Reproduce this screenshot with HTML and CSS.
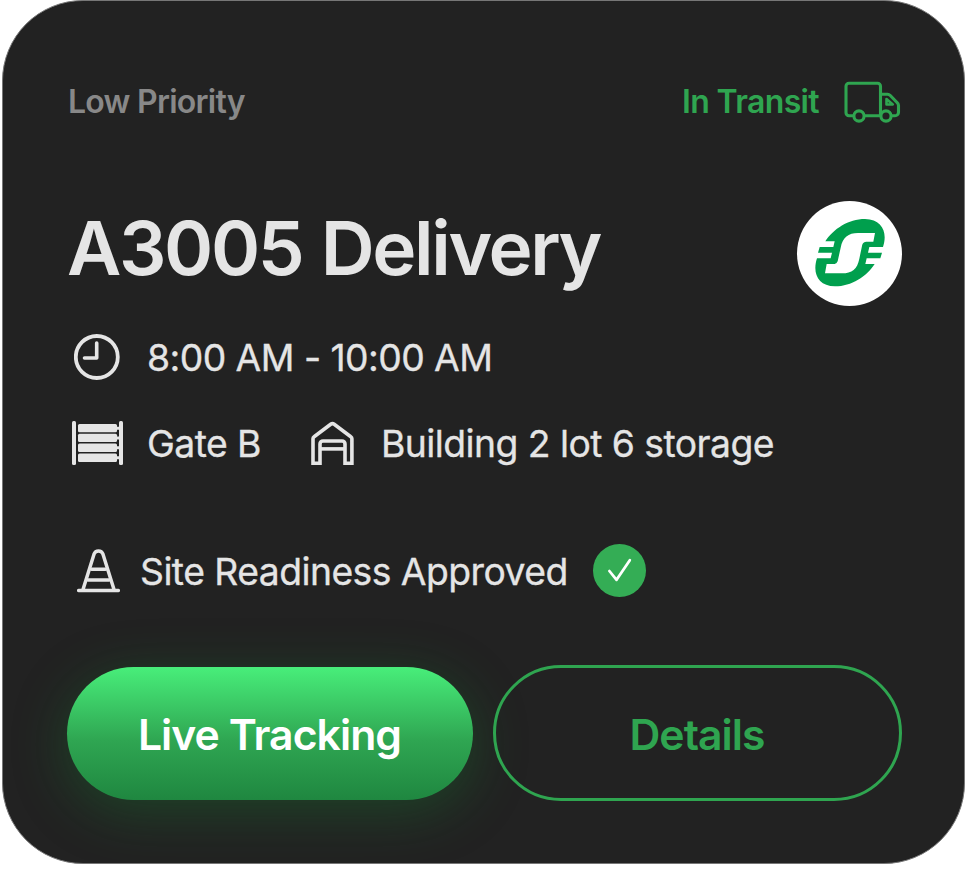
FILE: index.html
```html
<!DOCTYPE html>
<html lang="en">

<head>
  <meta charset="UTF-8">
  <meta name="viewport" content="width=device-width, initial-scale=1.0">
  <title>A3005 Delivery</title>
  <link rel="stylesheet" href="styles.css">
</head>

<body>
  <main class="card">
    <header class="card-header">
      <span class="priority">Low Priority</span>
      <div class="status">
        <span class="status-text">In Transit</span>
        <svg class="truck-icon" viewBox="0 0 58 42" fill="none" stroke="currentColor" stroke-width="3.1" stroke-linejoin="round">
          <path d="M9.500 34.800H5a3 3 0 0 1-3-3V5.300a3 3 0 0 1 3-3h28.500a3 3 0 0 1 3 3V34.800M20.500 34.800H36.500M36.500 13.300H43.500a4 4 0 0 1 2.800 1.200L53 21.500a4 4 0 0 1 1.500 2.800V31.300a3.500 3.500 0 0 1-3.500 3.500H47.500" />
          <circle cx="15" cy="35" r="5.100" />
          <circle cx="42" cy="35" r="5.100" />
          <path d="M42.500 18L48.800 23.500H42.500Z" stroke-width="2.600" />
        </svg>
      </div>
    </header>

    <section class="title-row">
      <h1>A3005 Delivery</h1>
      <div class="logo">
        <svg viewBox="-39 -39 315 315">
          <path fill="#009f4d" d="M46 82C70 45 115 15 165 15C205 15 224 40 224 70C224 80 222 90 219 99H178L174 116H216L211 133H170L166 150H194C170 187 125 217 75 217C35 217 16 192 16 162C16 152 18 142 21 133H62L66 116H24L29 99H70L74 82Z" />
          <path fill="#fff" d="M195 57L190 83H172C162 83 158 86 156 96L148 134C142 165 126 178 96 178H45L50 150H68C78 150 82 147 84 137L92 101C98 70 115 57 144 57Z" />
        </svg>
      </div>
    </section>

    <section class="time-row">
      <svg class="clock-icon" viewBox="0 0 46 46" fill="none" stroke="currentColor" stroke-width="3.800">
        <circle cx="22.800" cy="23" r="21" />
        <path d="M22.700 9V24H10.500" stroke-width="3.600" stroke-linecap="round" stroke-linejoin="round" />
      </svg>
      <span class="time">8:00 AM - 10:00 AM</span>
    </section>

    <section class="place-row">
      <svg class="gate-icon" viewBox="0 0 52 44" fill="currentColor">
        <rect x="0" y="0" width="4" height="44" rx="1.500" />
        <rect x="47" y="0" width="4" height="44" rx="1.500" />
        <rect x="6" y="3" width="39" height="8.300" rx="1.500" />
        <rect x="6" y="12.800" width="39" height="8.300" rx="1.500" />
        <rect x="6" y="22.600" width="39" height="8.400" rx="1.500" />
        <rect x="6" y="32.600" width="39" height="8.500" rx="1.500" />
        <path d="M44 5.700h4v3h-4zM44 15.500h4v3h-4zM44 25.300h4v3h-4zM44 35.300h4v3h-4z" />
      </svg>
      <span class="gate">Gate B</span>
      <svg class="building-icon" viewBox="0 0 44 44" fill="none" stroke="currentColor" stroke-width="3.600">
        <path d="M2 42.200V17.800a2.500 2.500 0 0 1 1.100-2.100L19.700 3.300a3 3 0 0 1 3.500 0L39.800 15.700a2.500 2.500 0 0 1 1.100 2.100V42.200H34V23a3 3 0 0 0-3-3H12a3 3 0 0 0-3 3V42.200Z" />
        <path d="M9 27.900H34" />
      </svg>
      <span class="building">Building 2 lot 6 storage</span>
    </section>

    <section class="readiness-row">
      <svg class="cone-icon" viewBox="0 0 43 44" fill="none" stroke="currentColor" stroke-width="3.500" stroke-linecap="round">
        <path d="M1.700 41.500H41.300M6 40.500L17 5.200Q18.200 2 21.500 2Q24.800 2 26 5.200L37 40.500" />
        <path d="M14.500 20.300H28.500M11 31H32" />
      </svg>
      <span class="readiness">Site Readiness Approved</span>
      <span class="badge">
        <svg viewBox="0 0 54 54" fill="none" stroke="#fff" stroke-width="2.800" stroke-linecap="round" stroke-linejoin="round">
          <path d="M16.700 27.500L24 36.500L37.500 16.500" />
        </svg>
      </span>
    </section>

    <footer class="actions">
      <button class="btn btn-primary" type="button">Live Tracking</button>
      <button class="btn btn-outline" type="button">Details</button>
    </footer>
  </main>
</body>

</html>
```
FILE: styles.css
```css
body {
  font-family: 'Inter', sans-serif;
  margin: 0;
  background-color: #fff;
}

.card {
  box-sizing: border-box;
  width: 963px;
  height: 864px;
  margin-left: 2px;
  padding: 80px 62px 0 64px;
  border: 1px solid #777;
  border-radius: 81px;
  background-color: #222;
  color: #e5e5e5;
  overflow: hidden;
}

.card span,
h1 {
  white-space: nowrap;
}

.card-header,
.title-row {
  display: flex;
  justify-content: space-between;
  align-items: center;
}

.card-header {
  height: 42px;
  font-size: 32px;
  font-weight: 600;
  line-height: 40px;
  letter-spacing: -0.75px;
}

.priority {
  padding-left: 1px;
  color: #888;
}

.status {
  display: flex;
  align-items: center;
  gap: 25px;
  color: #2fa550;
}

.status-text {
  letter-spacing: -0.65px;
}

.truck-icon {
  width: 58px;
  height: 42px;
}

.title-row {
  height: 105px;
  margin-top: 78px;
}

h1 {
  margin: 0;
  padding-bottom: 11px;
  font-size: 74.700px;
  font-weight: 600;
  line-height: 90px;
  letter-spacing: -2.4px;
  word-spacing: 2px;
}

.logo {
  width: 105px;
  height: 105px;
  border-radius: 50%;
  background-color: #fff;
}

.logo svg,
.badge svg,
.card > section > svg {
  display: block;
}

.time-row,
.place-row,
.readiness-row {
  display: flex;
  align-items: center;
  font-size: 37.300px;
  line-height: 46px;
  letter-spacing: -0.55px;
}

.time,
.gate,
.building,
.readiness {
  padding-top: 2px;
  -webkit-text-stroke: 0.3px currentColor;
}

.time-row {
  height: 46px;
  margin-top: 28px;
  padding-left: 7px;
}

.clock-icon {
  width: 46px;
  height: 46px;
  margin-right: 27px;
}

.place-row {
  height: 44px;
  margin-top: 41px;
  padding-left: 5px;
}

.gate-icon {
  width: 52px;
  height: 44px;
  margin-right: 23px;
}

.building-icon {
  width: 44px;
  height: 44px;
  margin: 0 26px 0 50px;
}

.readiness-row {
  height: 53px;
  margin-top: 79px;
  padding-left: 10px;
}

.cone-icon {
  width: 43px;
  height: 44px;
  margin-right: 20px;
}

.badge {
  width: 53px;
  height: 53px;
  margin-left: 25px;
  border-radius: 50%;
  background-color: #34ad55;
}

.actions {
  display: flex;
  align-items: center;
  gap: 20px;
  margin-top: 68px;
}

.btn {
  box-sizing: border-box;
  padding: 2px 1px 0 0;
  border: none;
  border-radius: 68px;
  font-family: inherit;
  font-size: 42.700px;
  font-weight: 600;
  letter-spacing: -0.95px;
}

.btn-primary {
  width: 406px;
  height: 133px;
  background: linear-gradient(#48ee7a, #2fa652 55%, #1f8740);
  box-shadow: 0 11px 54px rgba(22, 130, 50, 0.36);
  color: #fff;
}

.btn-outline {
  width: 409px;
  height: 136px;
  border: 3px solid #2fa550;
  background: none;
  color: #2fa550;
}
```
